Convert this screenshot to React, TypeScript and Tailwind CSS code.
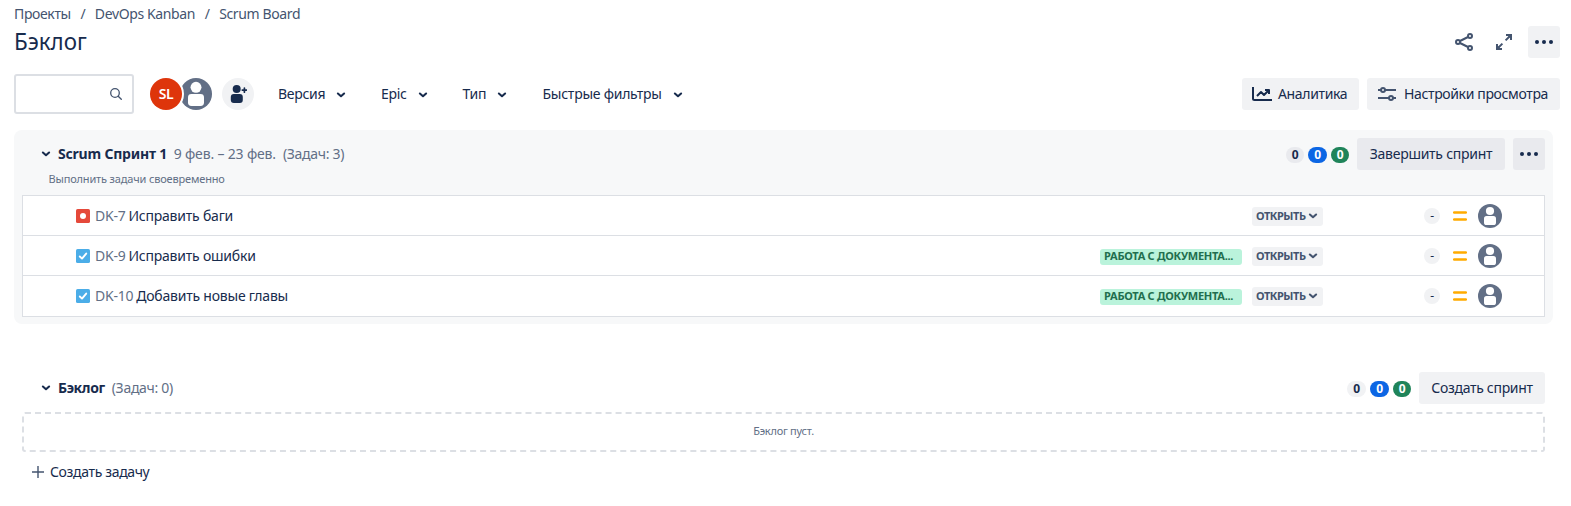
import React from "react";

function Chevron({ className = "" }: { className?: string }) {
  return (
    <svg width="10" height="8" viewBox="0 0 10 8" fill="none" stroke="currentColor" className={`shrink-0 ${className}`}>
      <path d="M1.9 2.5L5 5.2L8.1 2.5" strokeWidth="2.1" strokeLinejoin="round" strokeLinecap="round" />
    </svg>
  );
}

function Dots() {
  return (
    <svg width="20" height="6" viewBox="0 0 20 6" fill="#172b4d">
      <circle cx="3" cy="3" r="2" />
      <circle cx="10" cy="3" r="2" />
      <circle cx="17" cy="3" r="2" />
    </svg>
  );
}

function Person({ size }: { size: number }) {
  return (
    <svg width={size} height={size} viewBox="0 0 24 24" className="shrink-0">
      <circle cx="12" cy="12" r="12" fill="#626f86" />
      <circle cx="12" cy="7" r="4.1" fill="#fff" />
      <rect x="6" y="12" width="12" height="9" rx="2.6" fill="#fff" />
    </svg>
  );
}

function Counters({ className }: { className: string }) {
  return (
    <div className="mt-px flex gap-[4px] text-[12px] leading-4 font-bold text-white">
      <span className={`h-4 rounded-full text-center text-[#172b4d] ${className}`}>0</span>
      <span className="h-4 w-[19px] rounded-full bg-[#0c66e4] text-center">0</span>
      <span className="h-4 w-[18px] rounded-full bg-[#1f845a] text-center">0</span>
    </div>
  );
}

function Filter({ label, className }: { label: string; className: string }) {
  return (
    <button className={`flex h-8 items-center justify-between whitespace-nowrap ${className}`}>
      <span>{label}</span>
      <Chevron className="mt-px" />
    </button>
  );
}

type Issue = { id: string; title: string; kind: "bug" | "task"; epic?: string };

const issues: Issue[] = [
  { id: "DK-7", title: "Исправить баги", kind: "bug" },
  { id: "DK-9", title: "Исправить ошибки", kind: "task", epic: "РАБОТА С ДОКУМЕНТА..." },
  { id: "DK-10", title: "Добавить новые главы", kind: "task", epic: "РАБОТА С ДОКУМЕНТА..." },
];

function IssueIcon({ kind }: { kind: Issue["kind"] }) {
  return (
    <svg width="14" height="14" viewBox="0 0 14 14" className="shrink-0">
      <rect width="14" height="14" rx="1.6" fill={kind === "bug" ? "#e5493a" : "#4bade8"} />
      {kind === "bug" ? (
        <circle cx="7" cy="7" r="3" fill="#fff" />
      ) : (
        <path d="M3.8 7.5L6 9.6L10.2 4.6" fill="none" stroke="#fff" strokeWidth="1.9" strokeLinecap="round" strokeLinejoin="round" />
      )}
    </svg>
  );
}

function IssueRow({ issue }: { issue: Issue }) {
  return (
    <div className="flex h-10 items-center border-t border-[#dcdfe4] pr-[42px] pl-[53px] first:h-[39px] first:border-t-0 last:h-[41px] last:pb-px">
      <IssueIcon kind={issue.kind} />
      <span className="ml-[5px] tracking-[-0.25px] text-[#626f86]">{issue.id}</span>
      <span className="ml-[3px] tracking-[-0.21px]">{issue.title}</span>
      {issue.epic && (
        <span className="mt-0.5 ml-auto h-4 w-[142px] rounded-[3px] bg-[#baf3db] pl-[4px] text-[11px] leading-[14px] font-bold tracking-[-0.26px] whitespace-nowrap text-[#216e4e]">
          {issue.epic}
        </span>
      )}
      <span className={`mt-px flex h-[19px] w-[71px] items-center justify-between rounded-[3px] bg-[#f1f2f4] pr-[5px] pl-[4px] text-[11px] font-bold tracking-[-0.45px] text-[#44546f] ${issue.epic ? "ml-[10px]" : "ml-auto"}`}>
        ОТКРЫТЬ
        <Chevron />
      </span>
      <span className="ml-[101px] h-4 w-4 rounded-full bg-[#f1f2f4] text-center text-[12px] leading-4">-</span>
      <svg width="14" height="10" viewBox="0 0 14 10" className="ml-[13px]" stroke="#ffab00" strokeWidth="2.3" strokeLinecap="round">
        <path d="M1.1 1.5H12.9M1.1 8.5H12.9" />
      </svg>
      <span className="ml-[11px]"><Person size={24} /></span>
    </div>
  );
}

export default function App() {
  return (
    <main className="h-[506px] w-[1571px] overflow-hidden bg-white pl-[14px] font-['Noto_Sans',sans-serif] text-[14px] leading-5 tracking-[-0.3px] text-[#172b4d]">
      <nav className="flex h-6 items-center pt-1 tracking-[-0.37px] text-[#44546f]">
        <span>Проекты</span>
        <span className="w-[24px] text-center">/</span>
        <span>DevOps Kanban</span>
        <span className="w-[24px] text-center">/</span>
        <span>Scrum Board</span>
      </nav>

      <header className="mt-0.5 flex h-8 items-center pr-[11px]">
        <h1 className="-mt-[3px] origin-left scale-x-[0.93] text-[24px] leading-7 tracking-normal">Бэклог</h1>
        <div className="ml-auto flex items-center text-[#44546f]">
          <button className="flex h-8 w-8 items-center justify-center">
            <svg width="20" height="20" viewBox="0 0 20 20" fill="none" stroke="currentColor" strokeWidth="2">
              <circle cx="4" cy="10" r="2" />
              <circle cx="16" cy="4" r="2" />
              <circle cx="16" cy="16" r="2" />
              <path d="M6 9L14 5M6 11L14 15" />
            </svg>
          </button>
          <button className="ml-2 flex h-8 w-8 items-center justify-center">
            <svg width="16" height="16" viewBox="0 0 16 16" fill="none" stroke="currentColor" strokeWidth="2">
              <path d="M10 1H15V6M15 1L9.6 6.4M6 15H1V10M1 15L6.4 9.6" />
              <path d="M11 1L15 5V1ZM5 15L1 11V15Z" fill="currentColor" stroke="none" />
            </svg>
          </button>
          <button className="ml-2 flex h-8 w-8 items-center justify-center rounded-[3px] bg-[#f1f2f4]"><Dots /></button>
        </div>
      </header>

      <div className="mt-4 flex h-10 items-center pr-[11px]">
        <div className="flex h-10 w-[120px] items-center justify-end rounded-[3px] border-2 border-[#dcdfe4] pr-[10px]">
          <svg width="12" height="12" viewBox="0 0 12 12" fill="none" stroke="#44546f" strokeWidth="1.3" strokeLinecap="round">
            <circle cx="5" cy="5" r="4.3" />
            <path d="M8.2 8.2L11.3 11.3" />
          </svg>
        </div>
        <div className="ml-4 flex">
          <span className="z-10 h-8 w-8 rounded-full bg-[#de350b] text-center text-[14px] leading-8 font-semibold text-white ring-2 ring-white">SL</span>
          <span className="-ml-0.5"><Person size={32} /></span>
        </div>
        <span className="ml-[10px] flex h-8 w-8 items-center justify-center rounded-full bg-[#f1f2f4]">
          <svg width="18" height="18" viewBox="0 0 18 18" fill="#172b4d">
            <circle cx="7.7" cy="4" r="4" />
            <rect x="1.8" y="9" width="12" height="9" rx="3" />
            <path d="M15.4 3V7.2M13.3 5.1H17.5" stroke="#172b4d" strokeWidth="1.7" strokeLinecap="round" />
          </svg>
        </span>
        <Filter label="Версия" className="ml-6 w-[68px]" />
        <Filter label="Epic" className="ml-[35px] w-[47px]" />
        <Filter label="Тип" className="ml-[34.5px] w-[44.5px]" />
        <Filter label="Быстрые фильтры" className="ml-[35.5px] w-[140.5px] tracking-[-0.25px]" />
        <button className="ml-auto flex h-8 w-[117px] items-center rounded-[3px] bg-[#f1f2f4] pl-[10px] tracking-[-0.35px]">
          <svg width="20" height="16" viewBox="0 0 20 16" fill="none" stroke="#172b4d" strokeWidth="2" className="mr-[6px]">
            <path d="M1 1V12.5Q1 14 2.5 14H20" />
            <path d="M5 10L9 6L12 9L17 4M13 4H17V8" strokeLinejoin="round" />
          </svg>
          Аналитика
        </button>
        <button className="ml-2 flex h-8 w-[193px] items-center rounded-[3px] bg-[#f1f2f4] pl-[11px] tracking-[-0.36px]">
          <svg width="18" height="14" viewBox="0 0 18 14" fill="none" stroke="#44546f" strokeWidth="2" className="mr-[8px]">
            <path d="M0 3H3M7 3H18M0 11H11M15 11H18" />
            <circle cx="5" cy="3" r="2" />
            <circle cx="13" cy="11" r="2" />
          </svg>
          Настройки просмотра
        </button>
      </div>

      <section className="mt-4 h-[194px] w-[1539px] rounded-lg bg-[#f7f8f9] px-2 pt-2">
        <div className="flex h-8 items-center">
          <Chevron className="ml-[19px]" />
          <h2 className="ml-[7px] font-bold tracking-[-0.2px]">Scrum Спринт 1</h2>
          <span className="ml-[6.5px] tracking-[-0.17px] text-[#626f86]">9 фев. – 23 фев.</span>
          <span className="ml-[7px] text-[#626f86]">(Задач: 3)</span>
          <div className="ml-auto flex items-center">
            <Counters className="w-[18px] bg-[#e9eaee]" />
            <button className="ml-2 h-8 w-[148px] rounded-[3px] bg-[#e9eaee] tracking-[-0.25px]">Завершить спринт</button>
            <button className="ml-2 flex h-8 w-8 items-center justify-center rounded-[3px] bg-[#e9eaee]"><Dots /></button>
          </div>
        </div>
        <p className="h-[25px] pl-[26.5px] text-[11px] leading-[18px] tracking-[-0.16px] text-[#626f86]">Выполнить задачи своевременно</p>
        <div className="border border-[#dcdfe4] bg-white">
          {issues.map((issue) => (
            <IssueRow key={issue.id} issue={issue} />
          ))}
        </div>
      </section>

      <section className="mt-12 w-[1539px] px-2">
        <div className="flex h-8 items-center">
          <Chevron className="ml-[19px]" />
          <h2 className="ml-[7px] font-bold tracking-[-0.4px]">Бэклог</h2>
          <span className="ml-[7px] text-[#626f86]">(Задач: 0)</span>
          <div className="ml-auto flex items-center">
            <Counters className="w-[19px] bg-[#f1f2f4]" />
            <button className="ml-2 h-8 w-[126px] rounded-[3px] bg-[#f1f2f4]">Создать спринт</button>
          </div>
        </div>
        <div className="mt-2 h-10 rounded-[3px] border-2 border-dashed border-[#dcdfe4] text-center text-[11px] leading-[34px] tracking-[-0.25px] text-[#626f86]">
          Бэклог пуст.
        </div>
        <button className="mt-[10px] ml-[10px] flex items-center tracking-[-0.35px]">
          <svg width="12" height="12" viewBox="0 0 12 12" stroke="#44546f" strokeWidth="1.4" className="mr-[6px]">
            <path d="M6 0V12M0 6H12" />
          </svg>
          Создать задачу
        </button>
      </section>
    </main>
  );
}
